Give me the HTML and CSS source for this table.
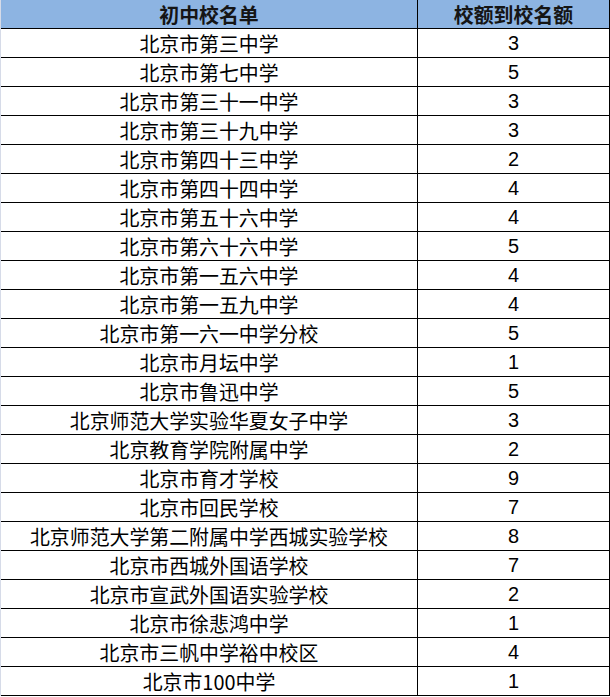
FILE: index.html
```html
<!DOCTYPE html>
<html lang="zh-CN">
<head>
<meta charset="utf-8">
<title>初中校名单</title>
<link rel="stylesheet" href="styles.css">
</head>
<body>
<div class="sheet">
  <div class="row head"><div class="name">初中校名单</div><div class="num">校额到校名额</div></div>
  <div class="row"><div class="name">北京市第三中学</div><div class="num">3</div></div>
  <div class="row"><div class="name">北京市第七中学</div><div class="num">5</div></div>
  <div class="row"><div class="name">北京市第三十一中学</div><div class="num">3</div></div>
  <div class="row"><div class="name">北京市第三十九中学</div><div class="num">3</div></div>
  <div class="row"><div class="name">北京市第四十三中学</div><div class="num">2</div></div>
  <div class="row"><div class="name">北京市第四十四中学</div><div class="num">4</div></div>
  <div class="row"><div class="name">北京市第五十六中学</div><div class="num">4</div></div>
  <div class="row"><div class="name">北京市第六十六中学</div><div class="num">5</div></div>
  <div class="row"><div class="name">北京市第一五六中学</div><div class="num">4</div></div>
  <div class="row"><div class="name">北京市第一五九中学</div><div class="num">4</div></div>
  <div class="row"><div class="name">北京市第一六一中学分校</div><div class="num">5</div></div>
  <div class="row"><div class="name">北京市月坛中学</div><div class="num">1</div></div>
  <div class="row"><div class="name">北京市鲁迅中学</div><div class="num">5</div></div>
  <div class="row"><div class="name">北京师范大学实验华夏女子中学</div><div class="num">3</div></div>
  <div class="row"><div class="name">北京教育学院附属中学</div><div class="num">2</div></div>
  <div class="row"><div class="name">北京市育才学校</div><div class="num">9</div></div>
  <div class="row"><div class="name">北京市回民学校</div><div class="num">7</div></div>
  <div class="row"><div class="name">北京师范大学第二附属中学西城实验学校</div><div class="num">8</div></div>
  <div class="row"><div class="name">北京市西城外国语学校</div><div class="num">7</div></div>
  <div class="row"><div class="name">北京市宣武外国语实验学校</div><div class="num">2</div></div>
  <div class="row"><div class="name">北京市徐悲鸿中学</div><div class="num">1</div></div>
  <div class="row"><div class="name">北京市三帆中学裕中校区</div><div class="num">4</div></div>
  <div class="row"><div class="name">北京市100中学</div><div class="num">1</div></div>
</div>
</body>
</html>
```
FILE: styles.css
```css
html, body {
  margin: 0;
  padding: 0;
  background: #ffffff;
}
.sheet {
  width: 610px;
  box-sizing: border-box;
  border-left: 1px solid #d6dbe8;
  border-right: 1px solid #000000;
  font-family: "Noto Sans CJK SC", "Noto Sans", sans-serif;
  font-size: 19.9px;
  color: #000000;
}
.row {
  display: flex;
  height: 29px;
  box-sizing: border-box;
  border-bottom: 1px solid #000000;
}
.name, .num {
  display: flex;
  align-items: center;
  justify-content: center;
  line-height: 1;
  white-space: nowrap;
  padding-top: 1px;
}
.name {
  width: 417px;
  flex: none;
  box-sizing: border-box;
  border-right: 1px solid #000000;
}
.num {
  flex: 1;
  font-family: "Liberation Sans", "Noto Sans CJK SC", sans-serif;
}
.head {
  background: #8db4e2;
  color: #151515;
  font-weight: bold;
}
.head .num {
  font-family: "Noto Sans CJK SC", sans-serif;
}
```
